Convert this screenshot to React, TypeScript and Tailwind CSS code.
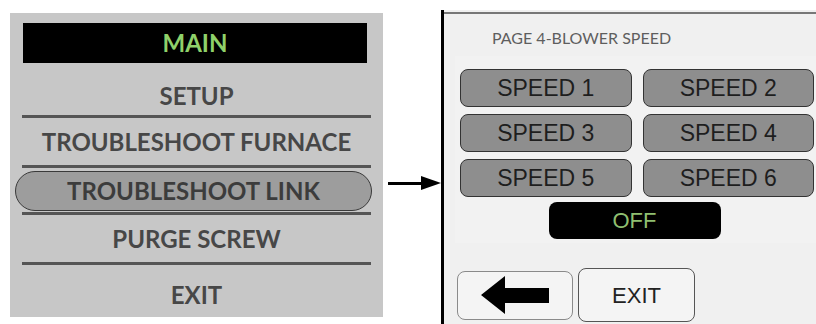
import React from 'react';

const speeds = ['SPEED 1', 'SPEED 2', 'SPEED 3', 'SPEED 4', 'SPEED 5', 'SPEED 6'];

const Line = () => <div className="mx-[12px] h-[3px] bg-[#555555]" />;

const MainMenu: React.FC = () => {
  return (
    <div
      className="flex h-[304px] w-[373px] flex-col bg-[#c7c7c7] pt-[10px] text-[#474747]"
      style={{ fontFamily: 'Lato, "Open Sans", sans-serif' }}
    >
      <div className="ml-[13px] mr-[16px] flex h-[40px] items-center justify-center bg-black text-[24px] font-bold text-[#8fd16a]">
        MAIN
      </div>
      <div className="flex h-[52px] items-end justify-center pb-[1px] text-[24px] font-bold">SETUP</div>
      <Line />
      <div className="flex h-[47px] items-center justify-center text-[24px] font-bold">TROUBLESHOOT FURNACE</div>
      <Line />
      {/* selected item */}
      <div className="ml-[5px] mr-[11px] mt-[3px] flex h-[40px] items-center justify-center rounded-full border border-[#3a3a3a] bg-[#9d9d9d] text-[24px] font-bold text-[#3c3c3c]">
        TROUBLESHOOT LINK
      </div>
      <div className="mt-[1px]">
        <Line />
      </div>
      <div className="flex h-[47px] items-center justify-center text-[24px] font-bold">PURGE SCREW</div>
      <Line />
      <div className="flex flex-1 items-center justify-center pt-[8px] text-[24px] font-bold">EXIT</div>
    </div>
  );
};

const BlowerSpeed: React.FC = () => {
  return (
    <div className="mt-[10px] flex h-[314px] flex-1 flex-col border-l-[3px] border-black bg-[#f0f0f0]">
      <div className="mt-[2px] h-[2px] bg-[#777777]" />
      <div className="flex-1 pl-[11px]" style={{ fontFamily: '"Liberation Sans", Arial, sans-serif' }}>
        <div
          className="mt-[14px] h-[20px] pl-[37px] text-[16px] leading-[20px] text-[#5e5e5e]"
          style={{ fontFamily: 'Lato, "Open Sans", sans-serif' }}
        >
          PAGE 4-BLOWER SPEED
        </div>
        <div className="mt-[8px] bg-[#f2f2f2] pb-[4px] pl-[5px] pr-[2px] pt-[13px]">
          <div className="grid grid-cols-2 gap-x-[11px] gap-y-[7px]">
            {speeds.map((s) => (
              <div
                key={s}
                className="flex h-[38px] items-center justify-center rounded-[8px] border-[1.5px] border-[#333333] bg-[#8e8e8e] text-[23px] text-[#1e1e1e]"
              >
                {s}
              </div>
            ))}
          </div>
          <div className="mt-[5px] flex justify-center pr-[5px]">
            <div className="flex h-[37px] w-[172px] items-center justify-center rounded-[8px] bg-black text-[22px] text-[#8fbf70]">
              OFF
            </div>
          </div>
        </div>
        <div className="mt-[25px] flex items-center gap-[5px] pl-[2px]">
          <div className="flex h-[49px] w-[116px] items-center justify-center rounded-[8px] border-[1.5px] border-[#8a8a8a] bg-[#f4f4f4]">
            <svg width="68" height="40" viewBox="0 0 68 40">
              <polygon points="0,20 24,1 24,13 68,13 68,28 24,28 24,39" fill="black" />
            </svg>
          </div>
          <div className="flex h-[54px] w-[117px] items-center justify-center rounded-[8px] border-[1.5px] border-[#555555] bg-[#f4f4f4] text-[22px] text-[#222222]">
            EXIT
          </div>
        </div>
      </div>
    </div>
  );
};

export default function App() {
  return (
    <div className="flex h-[324px] w-[816px] overflow-hidden bg-white">
      <div className="ml-[10px] mt-[13px]">
        <MainMenu />
      </div>
      <div className="flex w-[58px] items-start pl-[5px] pt-[174px]">
        <svg width="53" height="18" viewBox="0 0 53 18">
          <rect x="0" y="8" width="36" height="3" fill="black" />
          <polygon points="33,2 53,9 33,16" fill="black" />
        </svg>
      </div>
      <BlowerSpeed />
    </div>
  );
}
